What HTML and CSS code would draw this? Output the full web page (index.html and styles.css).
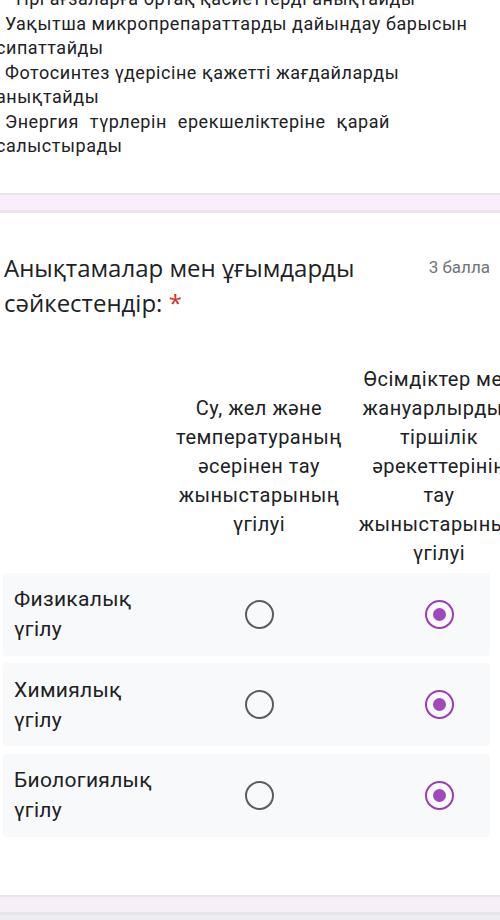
FILE: index.html
```html
<!DOCTYPE html>
<html lang="kk">
<head>
<meta charset="utf-8">
<link rel="stylesheet" href="styles.css">
</head>
<body>
<div class="intro">
  <p class="item first">Тірі ағзаларға ортақ қасиеттерді анықтайды</p>
  <p class="item">Уақытша микропрепараттарды дайындау барысын<br><span class="cont">сипаттайды</span></p>
  <p class="item">Фотосинтез үдерісіне қажетті жағдайларды<br><span class="cont">анықтайды</span></p>
  <p class="item wide">Энергия түрлерін ерекшеліктеріне қарай<br><span class="cont">салыстырады</span></p>
</div>
<div class="band"></div>
<section class="card">
  <div class="q-head">
    <h2 class="q-title">Анықтамалар мен ұғымдарды сәйкестендір: <span class="req">*</span></h2>
    <span class="points">3 балла</span>
  </div>
  <div class="grid">
    <div class="grid-head">
      <div class="cell-label"></div>
      <div class="col-title">Су, жел және температураның әсерінен тау жыныстарының үгілуі</div>
      <div class="col-title second">Өсімдіктер мен жануарлырдың тіршілік әрекеттерінің тау жыныстарының үгілуі</div>
    </div>
    <div class="grid-row">
      <div class="row-label">Физикалық<br>үгілу</div>
      <div class="cell"><span class="radio"></span></div>
      <div class="cell"><span class="radio on"></span></div>
    </div>
    <div class="grid-row">
      <div class="row-label">Химиялық<br>үгілу</div>
      <div class="cell"><span class="radio"></span></div>
      <div class="cell"><span class="radio on"></span></div>
    </div>
    <div class="grid-row">
      <div class="row-label">Биологиялық<br>үгілу</div>
      <div class="cell"><span class="radio"></span></div>
      <div class="cell"><span class="radio on"></span></div>
    </div>
  </div>
</section>
<div class="band bottom"></div>
<div class="after"></div>
</body>
</html>
```
FILE: styles.css
```css
html, body {
  margin: 0;
  padding: 0;
  overflow-x: hidden;
  background: #ffffff;
}
body {
  font-family: Roboto, "Noto Sans", sans-serif;
  color: #202124;
  width: 500px;
}
.intro {
  margin-top: -13px;
  padding-bottom: 34px;
}
.item {
  margin: 0;
  font-size: 18px;
  line-height: 24.5px;
  padding-left: 5px;
  white-space: nowrap;
  letter-spacing: 0.55px;
}
.item.first {
  padding-left: 13px;
}
.item .cont {
  margin-left: -9px;
}
.item.wide {
  word-spacing: 6px;
}
.band {
  height: 15px;
  background: #fbeefc;
  border-top: 2px solid #e6e6e8;
  border-bottom: 3px solid #e6e6e8;
}
.card {
  padding: 37px 0 0 0;
  height: 682px;
  box-sizing: border-box;
}
.q-head {
  display: flex;
  justify-content: space-between;
  align-items: flex-start;
  padding: 0 10px 0 4px;
}
.q-title {
  margin: 0;
  font-family: "Open Sans", sans-serif;
  font-weight: 400;
  font-size: 24px;
  line-height: 35px;
  width: 380px;
  color: #202124;
}
.req {
  color: #d93025;
}
.points {
  font-size: 17px;
  color: #70757a;
  line-height: 35px;
}
.grid {
  margin-top: 45px;
  padding-left: 3px;
}
.grid-head {
  display: grid;
  grid-template-columns: 166px 180px 180px;
  align-items: center;
  padding-bottom: 5px;
}
.col-title {
  text-align: center;
  font-size: 20px;
  line-height: 29px;
  letter-spacing: 0.5px;
  padding: 0 2px;
}
.col-title.second {
  padding: 0 7px;
}
.grid-row {
  display: grid;
  grid-template-columns: 166px 180px 141px;
  width: 487px;
  height: 83px;
  background: #f8f9fa;
  border-radius: 3px;
  align-items: center;
  margin-bottom: 7.5px;
  overflow: hidden;
}
.row-label {
  font-size: 21px;
  line-height: 30px;
  padding-left: 11px;
  letter-spacing: 0.3px;
}
.cell {
  display: flex;
  justify-content: center;
  align-items: center;
}
.grid-row .cell:last-child {
  justify-content: flex-start;
  padding-left: 76px;
}
.radio {
  width: 25px;
  height: 25px;
  border: 2.5px solid #595c60;
  border-radius: 50%;
  display: flex;
  align-items: center;
  justify-content: center;
}
.radio.on {
  border-color: #9a3fb3;
}
.radio.on::after {
  content: "";
  width: 13px;
  height: 13px;
  border-radius: 50%;
  background: #a049bd;
}
.band.bottom {
  background: #f7eff8;
}
.after {
  height: 20px;
  background: #eeeef2;
}
```
